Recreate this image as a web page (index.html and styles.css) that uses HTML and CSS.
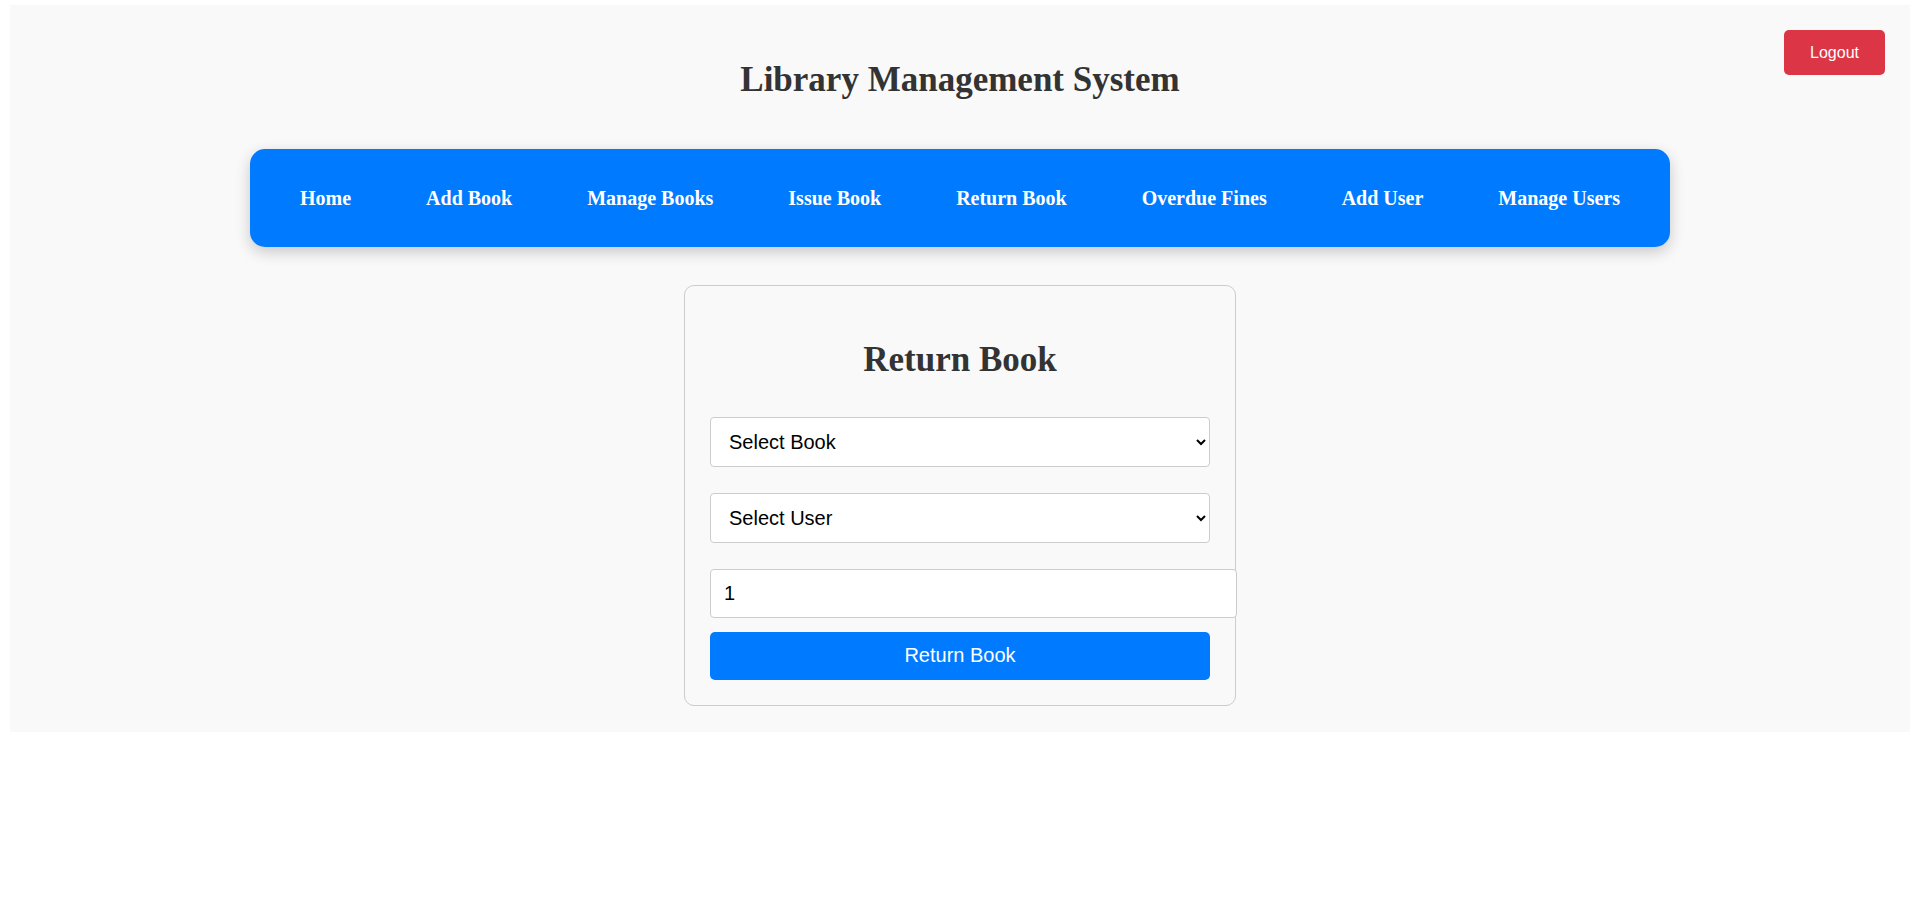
FILE: index.html
```html
<!DOCTYPE html>
<html lang="en">
<head>
<meta charset="utf-8">
<title>Library Management System</title>
<link rel="stylesheet" href="styles.css">
</head>
<body>
<div class="app">
  <button class="logout" type="button">Logout</button>
  <h1 class="title">Library Management System</h1>
  <nav class="nav">
    <a href="#" class="nav-link">Home</a>
    <a href="#" class="nav-link">Add Book</a>
    <a href="#" class="nav-link">Manage Books</a>
    <a href="#" class="nav-link">Issue Book</a>
    <a href="#" class="nav-link">Return Book</a>
    <a href="#" class="nav-link">Overdue Fines</a>
    <a href="#" class="nav-link">Add User</a>
    <a href="#" class="nav-link">Manage Users</a>
  </nav>
  <section class="card">
    <h2 class="card-title">Return Book</h2>
    <form class="form">
      <select class="field-select">
        <option>Select Book</option>
      </select>
      <select class="field-select">
        <option>Select User</option>
      </select>
      <input class="field-input" type="number" value="1">
      <button class="submit" type="button">Return Book</button>
    </form>
  </section>
</div>
</body>
</html>
```

FILE: styles.css
```css
html, body {
  background: #ffffff;
}

body {
  margin: 5px 10px 0;
  font-family: "Liberation Serif", "Times New Roman", serif;
}

.app {
  position: relative;
  background: #f9f9f9;
  padding: 55px 0 26px;
}

.logout {
  position: absolute;
  top: 25px;
  right: 25px;
  height: 45px;
  padding: 0 26px;
  border: none;
  border-radius: 5px;
  background: #dc3545;
  color: #ffffff;
  font-family: "Liberation Sans", Arial, sans-serif;
  font-size: 16px;
  cursor: pointer;
}

.title {
  margin: 0;
  font-size: 35px;
  line-height: 40px;
  font-weight: bold;
  color: #333333;
  text-align: center;
}

.nav {
  width: 1420px;
  height: 98px;
  box-sizing: border-box;
  margin: 49px auto 38px;
  padding: 0 50px;
  background: #007bff;
  border-radius: 15px;
  box-shadow: 0 5px 15px rgba(0, 0, 0, 0.2);
  display: flex;
  align-items: center;
  justify-content: space-between;
}

.nav-link {
  color: #ffffff;
  text-decoration: none;
  font-size: 20px;
  font-weight: bold;
}

.card {
  width: 500px;
  margin: 0 auto;
  padding: 25px;
  border: 1px solid #cccccc;
  border-radius: 10px;
  background: #f9f9f9;
}

.card-title {
  margin: 29px 0 37px;
  font-size: 35px;
  line-height: 40px;
  font-weight: bold;
  color: #333333;
  text-align: center;
}

.form {
  display: flex;
  flex-direction: column;
  align-items: flex-start;
  margin: 0;
}

.field-select {
  width: 100%;
  height: 50px;
  box-sizing: border-box;
  margin: 0 0 26px;
  padding: 0 8px 0 14px;
  border: 1px solid #cccccc;
  border-radius: 4px;
  background: #ffffff;
  color: #000000;
  font-family: "Liberation Sans", Arial, sans-serif;
  font-size: 20px;
}

.field-input {
  width: 100%;
  height: 23px;
  box-sizing: content-box;
  margin: 0 0 14px;
  padding: 12px 12px 12px 13px;
  border: 1px solid #cccccc;
  border-radius: 4px;
  background: #ffffff;
  color: #000000;
  font-family: "Liberation Sans", Arial, sans-serif;
  font-size: 20px;
}

.submit {
  width: 100%;
  height: 48px;
  padding: 0 0 2px;
  border: none;
  border-radius: 5px;
  background: #007bff;
  color: #ffffff;
  font-family: "Liberation Sans", Arial, sans-serif;
  font-size: 20px;
  cursor: pointer;
}
```
